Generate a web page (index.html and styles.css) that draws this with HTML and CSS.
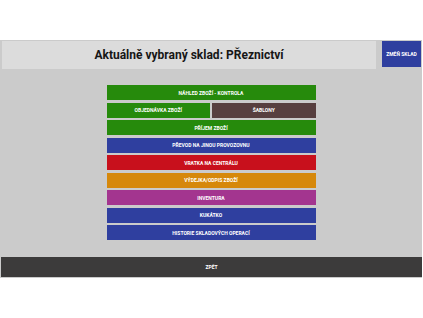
FILE: index.html
```html
<!DOCTYPE html>
<html lang="cs">
<head>
  <meta charset="UTF-8">
  <meta name="viewport" content="width=device-width, initial-scale=1.0">
  <title>Sklad</title>
  <link rel="stylesheet" href="styles.css">
</head>
<body>
  <div class="screen">
    <!-- Header -->
    <div class="header">
      <div class="header-title">Aktuálně vybraný sklad: PŘeznictví</div>
      <button class="change-btn">ZMĚŇ SKLAD</button>
    </div>

    <!-- Menu -->
    <div class="menu">
      <button class="menu-btn green">NÁHLED ZBOŽÍ - KONTROLA</button>
      <div class="menu-row">
        <button class="menu-btn green">OBJEDNÁVKA ZBOŽÍ</button>
        <button class="menu-btn brown">ŠABLONY</button>
      </div>
      <button class="menu-btn green">PŘÍJEM ZBOŽÍ</button>
      <button class="menu-btn blue">PŘEVOD NA JINOU PROVOZOVNU</button>
      <button class="menu-btn red">VRATKA NA CENTRÁLU</button>
      <button class="menu-btn orange">VÝDEJKA/ODPIS ZBOŽÍ</button>
      <button class="menu-btn purple">INVENTURA</button>
      <button class="menu-btn blue">KUKÁTKO</button>
      <button class="menu-btn blue">HISTORIE SKLADOVÝCH OPERACÍ</button>
    </div>

    <!-- Footer -->
    <div class="footer">
      <button class="back-btn">ZPĚT</button>
    </div>
  </div>
</body>
</html>
```

FILE: styles.css
```css
/* General Styling */
body {
  font-family: 'Roboto', 'Liberation Sans', sans-serif;
  margin: 0;
  padding: 0;
  background-color: #ffffff;
}

button {
  font-family: inherit;
  border: none;
  color: #fff;
  font-weight: bold;
  cursor: pointer;
  padding: 0;
}

.screen {
  margin-top: 40px;
  margin-right: 1px;
  background-color: #cbcbcb;
}

/* Header */
.header {
  display: flex;
  align-items: flex-start;
  gap: 6px;
  padding: 1px 1px 0 2px;
}

.header-title {
  flex: 1;
  height: 28px;
  line-height: 28px;
  background-color: #dcdcdc;
  text-align: center;
  font-size: 12px;
  font-weight: bold;
  color: #161616;
}

.change-btn {
  width: 39px;
  height: 26px;
  background-color: #2f3f9f;
  font-size: 5px;
}

/* Menu */
.menu {
  width: 209px;
  margin: 0 auto;
  padding: 16px 0 17px 0;
  display: flex;
  flex-direction: column;
  gap: 2.5px;
}

.menu-row {
  display: flex;
  gap: 2px;
}

.menu-row .menu-btn {
  flex: 1;
}

.menu-btn {
  height: 15px;
  font-size: 5px;
}

.green { background-color: #268a0c; }
.brown { background-color: #573f3f; }
.blue { background-color: #2f3f9f; }
.red { background-color: #c8101c; }
.orange { background-color: #d6880b; }
.purple { background-color: #a3358f; }

/* Footer */
.footer {
  display: flex;
  padding: 0 0 1px 1px;
}

.back-btn {
  flex: 1;
  height: 20px;
  background-color: #3c3b3b;
  font-size: 5px;
}
```
